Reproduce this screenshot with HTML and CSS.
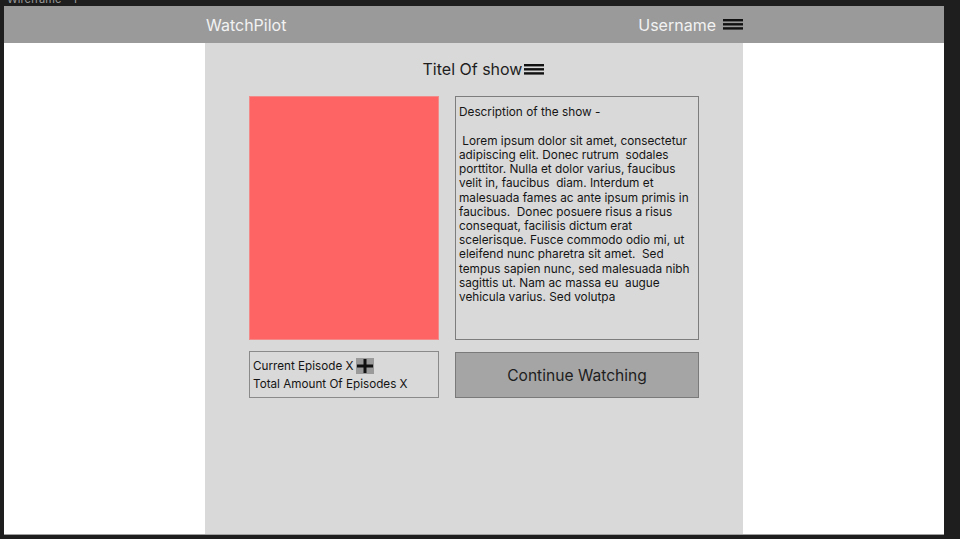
FILE: index.html
```html
<!DOCTYPE html>
<html lang="en">
<head>
<meta charset="utf-8">
<title>WatchPilot</title>
<link rel="stylesheet" href="styles.css">
</head>
<body>
<div class="label"><span>Wireframe - 1</span></div>
<div class="frame">
  <header class="header">
    <div class="header-inner">
      <span class="brand">WatchPilot</span>
      <div class="user">
        <span>Username</span>
        <svg class="burger" width="20" height="11" viewBox="0 0 20 11"><rect x="0" y="0" width="20" height="2.4"/><rect x="0" y="4.1" width="20" height="2.4"/><rect x="0" y="8.2" width="20" height="2.4"/></svg>
      </div>
    </div>
  </header>
  <main class="panel">
    <div class="title-row">
      <span class="title">Titel Of show</span>
      <svg class="burger" width="20" height="11" viewBox="0 0 20 11"><rect x="0" y="0" width="20" height="2.4"/><rect x="0" y="4.1" width="20" height="2.4"/><rect x="0" y="8.2" width="20" height="2.4"/></svg>
    </div>
    <div class="top-row">
      <div class="poster"></div>
      <div class="desc">
        <p class="desc-head">Description of the show -</p>
        <p class="desc-body"> Lorem ipsum dolor sit amet, consectetur
adipiscing elit. Donec rutrum  sodales
porttitor. Nulla et dolor varius, faucibus
velit in, faucibus  diam. Interdum et
malesuada fames ac ante ipsum primis in
faucibus.  Donec posuere risus a risus
consequat, facilisis dictum erat
scelerisque. Fusce commodo odio mi, ut
eleifend nunc pharetra sit amet.  Sed
tempus sapien nunc, sed malesuada nibh
sagittis ut. Nam ac massa eu  augue
vehicula varius. Sed volutpa</p>
      </div>
    </div>
    <div class="bottom-row">
      <div class="episodes">
        <div class="ep-line">
          <span>Current Episode X</span>
          <svg class="plus" width="18" height="16" viewBox="0 0 18 16"><rect x="0" y="0" width="18" height="16" fill="#9a9a9a"/><rect x="1" y="6.5" width="16" height="3" fill="#111"/><rect x="7.5" y="1" width="3" height="14" fill="#111"/></svg>
        </div>
        <div class="ep-line">Total Amount Of Episodes X</div>
      </div>
      <button class="continue">Continue Watching</button>
    </div>
  </main>
</div>
</body>
</html>
```
FILE: styles.css
```css
html, body {
  margin: 0;
  padding: 0;
}
body {
  background: #1e1e1e;
  font-family: Inter, "Noto Sans", sans-serif;
  height: 539px;
  overflow: hidden;
}
.label {
  height: 6px;
  overflow: hidden;
  padding-left: 7px;
  color: #9a9a9a;
  font-size: 11px;
}
.label span {
  display: block;
  line-height: 12px;
  margin-top: -7px;
}
.frame {
  margin-left: 4px;
  width: 940px;
  height: 528px;
  background: #ffffff;
  display: flex;
  flex-direction: column;
  border-bottom: 1px solid #a0a0a0;
}
.header {
  height: 37px;
  flex: none;
  background: #9a9a9a;
  display: flex;
  justify-content: center;
}
.header-inner {
  width: 538px;
  display: flex;
  justify-content: space-between;
  align-items: center;
  color: #f2f2f2;
  font-size: 16px;
}
.brand {
  padding-left: 1px;
}
.user {
  display: flex;
  align-items: center;
  gap: 7px;
}
.burger {
  fill: #111;
  display: block;
}
.panel {
  width: 538px;
  box-sizing: border-box;
  margin: 0 auto;
  flex: 1;
  background: #d9d9d9;
  padding: 16px 44px 0 44px;
}
.title-row {
  height: 20px;
  display: flex;
  justify-content: center;
  align-items: center;
  gap: 2px;
  padding-left: 19px;
  font-size: 16px;
  line-height: 20px;
  color: #1e1e1e;
}
.top-row {
  margin-top: 17px;
  display: grid;
  grid-template-columns: 190px 244px;
  gap: 16px;
  height: 244px;
}
.poster {
  background: #ff6464;
  box-shadow: inset 0 0 0 1px #f38a8a;
}
.desc {
  box-sizing: border-box;
  border: 1px solid #7d7d7d;
  padding: 8px 3px;
  font-size: 11.8px;
  line-height: 14.2px;
  color: #151515;
  overflow: hidden;
}
.desc p {
  margin: 0;
}
.desc-head {
  margin-bottom: 14.5px !important;
}
.desc-body {
  white-space: pre;
}
.bottom-row {
  margin-top: 11px;
  display: grid;
  grid-template-columns: 190px 244px;
  gap: 16px;
  align-items: end;
}
.episodes {
  box-sizing: border-box;
  height: 47px;
  border: 1px solid #8a8a8a;
  padding: 5px 3px 0 3px;
  font-size: 11.7px;
  line-height: 18px;
  color: #151515;
}
.ep-line {
  display: flex;
  align-items: center;
  gap: 2px;
  height: 18px;
}
.plus {
  display: block;
}
.continue {
  box-sizing: border-box;
  height: 46px;
  margin: 0;
  border: 1px solid #7a7a7a;
  background: #a5a5a5;
  font-family: Inter, "Noto Sans", sans-serif;
  font-size: 15.6px;
  color: #1e1e1e;
  padding: 0;
}
```
